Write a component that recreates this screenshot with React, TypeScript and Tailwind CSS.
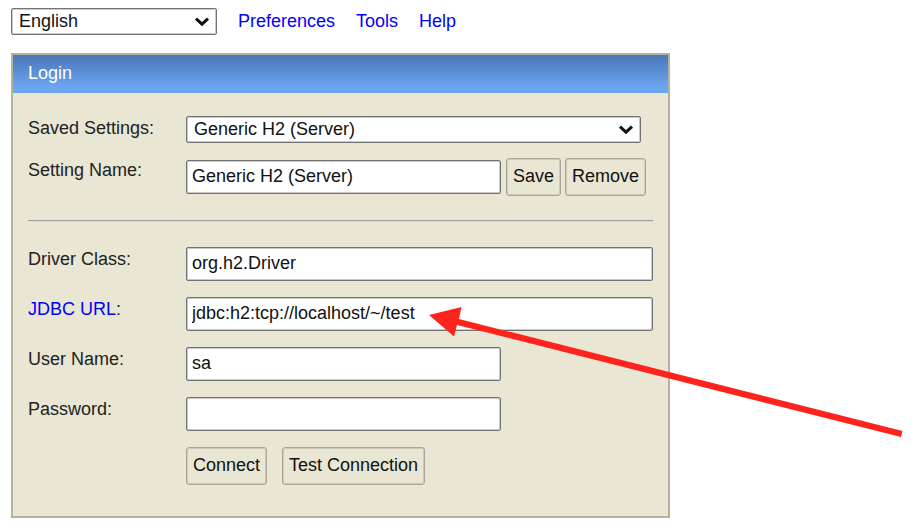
import React, { useState } from "react";

const fieldClass =
  "block h-[34px] rounded-xs border border-[#737373] bg-white px-[5px] pb-0.5 text-lg leading-6 text-[#111] inset-shadow-[0_0_0_1px_#c9c9c9]";

const buttonClass =
  "h-[38px] shrink-0 rounded-[3px] border border-[#a9a698] bg-[#e9e6d3] px-1.5 pb-0.5 text-lg leading-6 text-[#111] inset-shadow-[0_0_0_1px_#cdcab9] hover:bg-[#e0dcc6]";

function Select({
  id,
  label,
  options,
  className,
}: {
  id: string;
  label?: string;
  options: string[];
  className: string;
}) {
  return (
    <div className={`relative ${className}`}>
      <select
        id={id}
        aria-label={label}
        className="block h-[27px] w-full appearance-none rounded-xs border border-[#737373] bg-white pr-8 pb-0.5 pl-[7px] text-lg leading-6 text-[#111] inset-shadow-[0_0_0_1px_#c9c9c9]"
      >
        {options.map((o) => (
          <option key={o}>{o}</option>
        ))}
      </select>
      <svg
        className="pointer-events-none absolute top-[9px] right-[7px] h-[10px] w-[16px]"
        viewBox="0 0 16 10"
        fill="none"
        stroke="#111"
        strokeWidth="3"
        aria-hidden="true"
      >
        <path d="M2 1.6 L8 7.2 L14 1.6" />
      </svg>
    </div>
  );
}

function Row({
  label,
  htmlFor,
  children,
}: {
  label?: React.ReactNode;
  htmlFor?: string;
  children: React.ReactNode;
}) {
  return (
    <div className="flex items-start">
      <div className="w-[158px] shrink-0 pt-0.5 leading-5">
        {label && <label htmlFor={htmlFor}>{label}</label>}
      </div>
      <div className="relative flex min-w-0 flex-1 items-center">{children}</div>
    </div>
  );
}

function Arrow() {
  return (
    <svg
      className="pointer-events-none absolute top-[9px] left-[243px] h-[132px] w-[474px]"
      viewBox="429 306 474 132"
      fill="#fe231b"
      aria-hidden="true"
    >
      <path d="M429 315 L461.5 307 L459 319 L902.5 431 L901 437 L457 325 L454 336.5 Z" />
    </svg>
  );
}

export default function App() {
  const [name, setName] = useState("Generic H2 (Server)");
  const [driver, setDriver] = useState("org.h2.Driver");
  const [url, setUrl] = useState("jdbc:h2:tcp://localhost/~/test");
  const [user, setUser] = useState("sa");
  const [password, setPassword] = useState("");

  return (
    <main className="min-h-screen overflow-x-hidden bg-white px-[11px] pt-2 pb-3 font-['Liberation_Sans',Arial,sans-serif] text-lg text-[#222]">
      <nav className="flex items-center gap-[21px] leading-[27px] text-[#0000ff]">
        <Select id="language" label="Language" options={["English", "Deutsch", "Français"]} className="w-[206px]" />
        <a href="#preferences">Preferences</a>
        <a href="#tools">Tools</a>
        <a href="#help">Help</a>
      </nav>

      <form
        className="mt-[18px] w-full max-w-[659px] border-2 border-[#b5b2a2] bg-[#e9e6d3]"
        onSubmit={(e) => e.preventDefault()}
      >
        <h1 className="h-[38px] bg-linear-to-b from-[#4c76b8] to-[#6ba6f0] to-85% px-[15px] leading-9 text-white">
          Login
        </h1>

        <div className="px-[15px] pt-[23px] pb-[31px]">
          <Row label="Saved Settings:" htmlFor="setting">
            <Select id="setting" options={["Generic H2 (Server)", "Generic H2 (Embedded)"]} className="w-[455px]" />
          </Row>
          <div className="mt-[15px]">
            <Row label="Setting Name:" htmlFor="name">
              <input
                id="name"
                type="text"
                value={name}
                onChange={(e) => setName(e.target.value)}
                className={`${fieldClass} w-[315px] min-w-0`}
              />
              <div className="ml-[5px] flex gap-1">
                <button type="button" className={buttonClass}>Save</button>
                <button type="button" className={buttonClass}>Remove</button>
              </div>
            </Row>
          </div>

          <hr className="mt-6 mb-[25px] border-t border-b border-t-[#9a9c9e] border-b-[#d9dbe0]" />

          <div className="flex flex-col gap-4">
            <Row label="Driver Class:" htmlFor="driver">
              <input
                id="driver"
                type="text"
                value={driver}
                onChange={(e) => setDriver(e.target.value)}
                className={`${fieldClass} w-full`}
              />
            </Row>
            <Row
              label={
                <>
                  <a href="#jdbc-url" className="text-[#0000ff]">JDBC URL</a>:
                </>
              }
              htmlFor="url"
            >
              <input
                id="url"
                type="text"
                value={url}
                onChange={(e) => setUrl(e.target.value)}
                className={`${fieldClass} w-full`}
              />
              <Arrow />
            </Row>
            <Row label="User Name:" htmlFor="user">
              <input
                id="user"
                type="text"
                value={user}
                onChange={(e) => setUser(e.target.value)}
                className={`${fieldClass} w-[315px]`}
              />
            </Row>
            <Row label="Password:" htmlFor="password">
              <input
                id="password"
                type="password"
                value={password}
                onChange={(e) => setPassword(e.target.value)}
                className={`${fieldClass} w-[315px]`}
              />
            </Row>
            <Row>
              <div className="flex gap-[15px]">
                <button type="submit" className={buttonClass}>Connect</button>
                <button type="button" className={buttonClass}>Test Connection</button>
              </div>
            </Row>
          </div>
        </div>
      </form>
    </main>
  );
}
